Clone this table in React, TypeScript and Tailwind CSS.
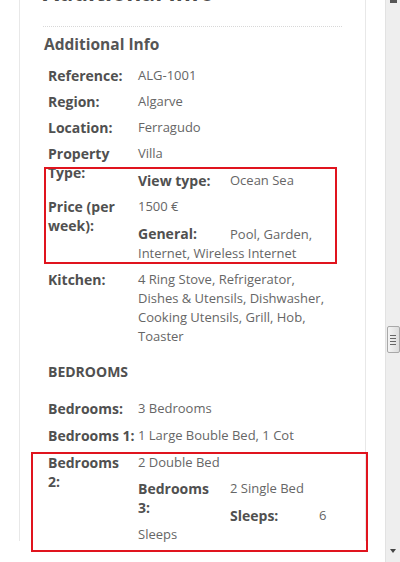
import type { ReactNode } from 'react';

// Two-column detail row: bold label, regular value
const Row = ({ label, children, labelW = 'w-[90px]', className = '' }: { label?: ReactNode; children: ReactNode; labelW?: string; className?: string }) => (
    <div className={`flex ${className}`}>
        <div className={`${labelW} shrink-0 h-[19px] text-[14px] font-bold text-[#505050]`}>{label}</div>
        <div className="flex-1 min-w-0 text-[#666]">{children}</div>
    </div>
);

// Red annotation frame drawn over a block
const Frame = ({ className }: { className: string }) => (
    <div className={`absolute border-2 border-[#e0141e] pointer-events-none ${className}`} />
);

export default function App() {
    return (
        <div className="h-[562px] w-[400px] overflow-hidden flex bg-white text-[13px] leading-[19px]" style={{ fontFamily: '"Open Sans", "Noto Sans", sans-serif' }}>
            <div className="flex-1">
                <div className="ml-[19px] w-[347px] h-full border-x border-[#e8e8e8] px-[23px]">
                    {/* cut-off title */}
                    <div className="-mt-[21px] h-[26px] text-[23px] leading-[26px] font-bold text-[#4a4a4a]">Additional Info</div>
                    <div className="mt-[21px] border-b border-dotted border-[#d8d8d8]" />

                    <h2 className="mt-[7px] ml-[1px] text-[15.5px] leading-[20px] font-bold text-[#555]">Additional Info</h2>

                    <div className="mt-[12px] pl-[5px] pr-[8px]">
                        <Row label="Reference:" className="mb-[7px]">ALG-1001</Row>
                        <Row label="Region:" className="mb-[7px]">Algarve</Row>
                        <Row label="Location:" className="mb-[7px]">Ferragudo</Row>
                        <Row label="Property Type:" className="mb-[8px]">Villa</Row>

                        <div className="relative">
                            <Frame className="-left-[4px] -right-[3px] -top-[4px] -bottom-[1px]" />
                            <Row className="mb-[7px]">
                                <Row label="View type:" labelW="w-[92px]">Ocean Sea</Row>
                            </Row>
                            <Row label="Price (per week):">
                                <div>1500 €</div>
                                <div className="mt-[8px]">
                                    <span className="font-bold text-[14px] text-[#505050] inline-block w-[92px]">General:</span>
                                    Pool, Garden, Internet, Wireless Internet
                                </div>
                            </Row>
                        </div>

                        <Row label="Kitchen:" className="mt-[7px]">
                            4 Ring Stove, Refrigerator, Dishes &amp; Utensils, Dishwasher, Cooking Utensils, Grill, Hob, Toaster
                        </Row>

                        <div className="mt-[16px] text-[14px] font-bold text-[#505050]">BEDROOMS</div>

                        <Row label="Bedrooms:" className="mt-[18px] mb-[8px]">3 Bedrooms</Row>
                        <Row label={<span className="whitespace-nowrap">Bedrooms 1:</span>} className="mb-[8px]">1 Large Bouble Bed, 1 Cot</Row>

                        <div className="relative">
                            <Frame className="-left-[17px] -right-[34px] -top-[1px] -bottom-[8px]" />
                            <Row label={<>Bedrooms<br />2:</>}>
                                <div>2 Double Bed</div>
                                <Row label={<>Bedrooms<br />3:</>} labelW="w-[92px]" className="mt-[7px]">
                                    <div>2 Single Bed</div>
                                    <Row label="Sleeps:" labelW="w-[89px]" className="mt-[8px]">6</Row>
                                </Row>
                                <div>Sleeps</div>
                            </Row>
                        </div>
                    </div>
                </div>
            </div>

            {/* fake browser scrollbar */}
            <div className="w-[15px] bg-[#eeeeee] border-l border-[#e2e2e2] flex flex-col items-center">
                <div className="h-[4px] w-full flex justify-center">
                    <div className="w-[7px] h-[3px] bg-[#555]" />
                </div>
                <div className="mt-[322px] w-[13px] h-[27px] rounded-[2px] border border-[#a8a8a8] bg-gradient-to-r from-[#f4f4f4] to-[#dcdcdc] flex flex-col items-center justify-center gap-[2px]">
                    <div className="w-[6px] h-px bg-[#666]" />
                    <div className="w-[6px] h-px bg-[#666]" />
                    <div className="w-[6px] h-px bg-[#666]" />
                    <div className="w-[6px] h-px bg-[#666]" />
                </div>
                <div className="mt-auto mb-[9px] w-0 h-0 border-x-[3.5px] border-x-transparent border-t-[4px] border-t-[#444]" />
            </div>
        </div>
    );
}
